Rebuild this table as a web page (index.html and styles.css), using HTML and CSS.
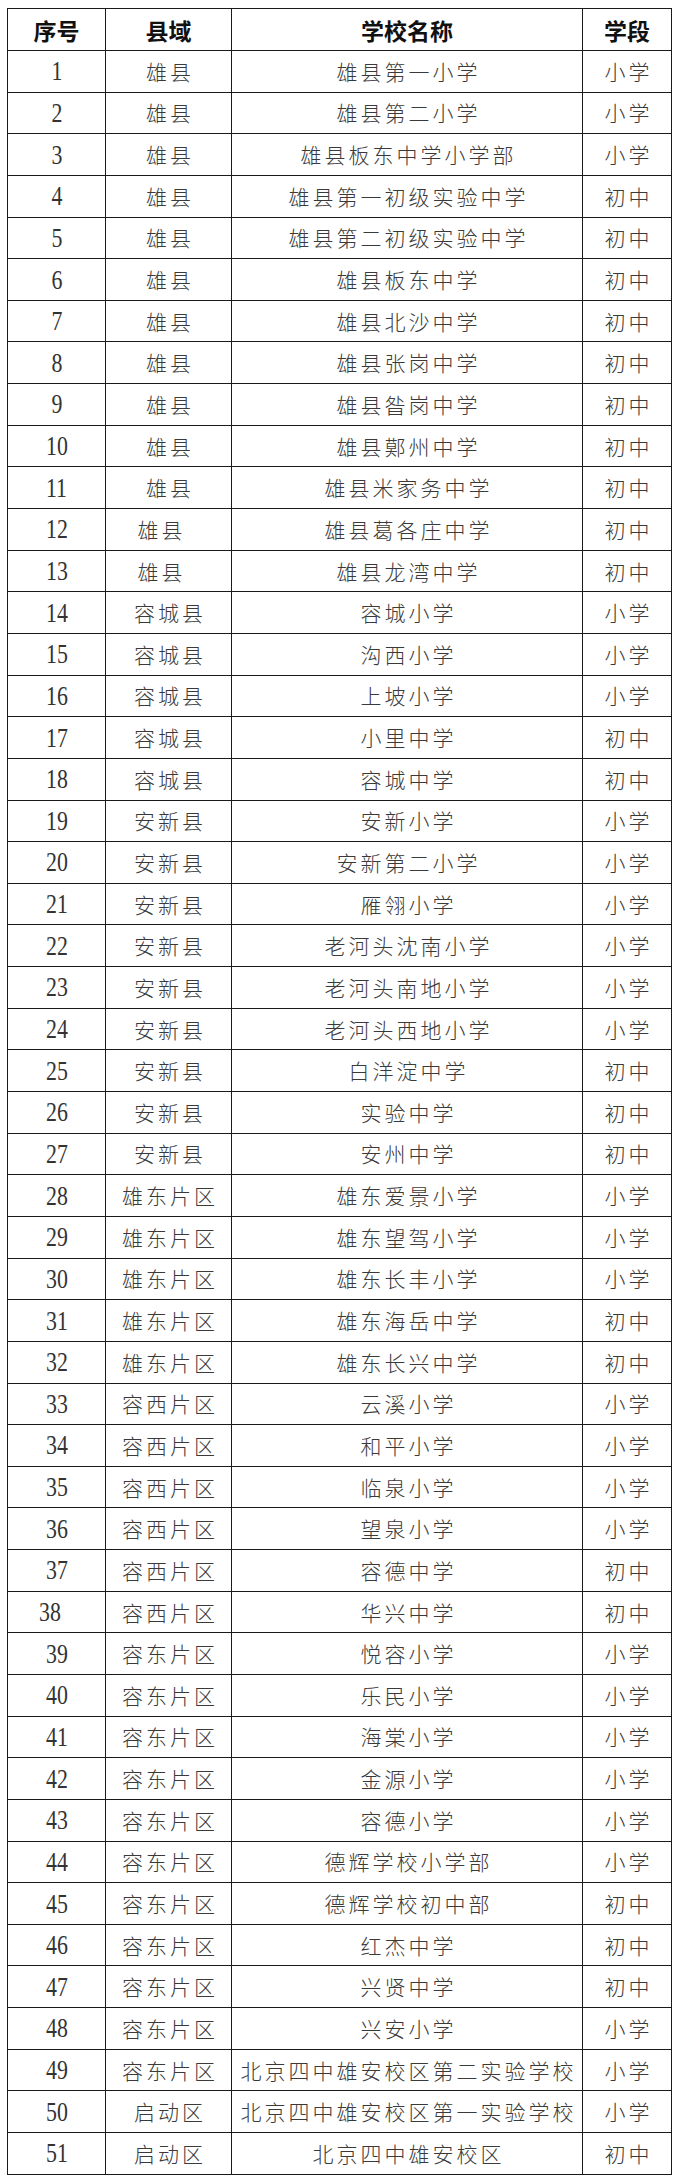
FILE: index.html
```html
<!DOCTYPE html>
<html lang="zh-CN">
<head>
<meta charset="utf-8">
<title>学校名单</title>
<link rel="stylesheet" href="styles.css">
</head>
<body>
<table class="list">
  <colgroup>
    <col class="c-no"><col class="c-area"><col class="c-name"><col class="c-level">
  </colgroup>
  <thead>
    <tr><th>序号</th><th>县域</th><th>学校名称</th><th>学段</th></tr>
  </thead>
  <tbody>
    <tr><td class="num"><span>1</span></td><td>雄县</td><td>雄县第一小学</td><td>小学</td></tr>
    <tr><td class="num"><span>2</span></td><td>雄县</td><td>雄县第二小学</td><td>小学</td></tr>
    <tr><td class="num"><span>3</span></td><td>雄县</td><td>雄县板东中学小学部</td><td>小学</td></tr>
    <tr><td class="num"><span>4</span></td><td>雄县</td><td>雄县第一初级实验中学</td><td>初中</td></tr>
    <tr><td class="num"><span>5</span></td><td>雄县</td><td>雄县第二初级实验中学</td><td>初中</td></tr>
    <tr><td class="num"><span>6</span></td><td>雄县</td><td>雄县板东中学</td><td>初中</td></tr>
    <tr><td class="num"><span>7</span></td><td>雄县</td><td>雄县北沙中学</td><td>初中</td></tr>
    <tr><td class="num"><span>8</span></td><td>雄县</td><td>雄县张岗中学</td><td>初中</td></tr>
    <tr><td class="num"><span>9</span></td><td>雄县</td><td>雄县昝岗中学</td><td>初中</td></tr>
    <tr><td class="num"><span>10</span></td><td>雄县</td><td>雄县鄚州中学</td><td>初中</td></tr>
    <tr><td class="num"><span>11</span></td><td>雄县</td><td>雄县米家务中学</td><td>初中</td></tr>
    <tr><td class="num"><span>12</span></td><td class="off">雄县</td><td>雄县葛各庄中学</td><td>初中</td></tr>
    <tr><td class="num"><span>13</span></td><td class="off">雄县</td><td>雄县龙湾中学</td><td>初中</td></tr>
    <tr><td class="num"><span>14</span></td><td>容城县</td><td>容城小学</td><td>小学</td></tr>
    <tr><td class="num"><span>15</span></td><td>容城县</td><td>沟西小学</td><td>小学</td></tr>
    <tr><td class="num"><span>16</span></td><td>容城县</td><td>上坡小学</td><td>小学</td></tr>
    <tr><td class="num"><span>17</span></td><td>容城县</td><td>小里中学</td><td>初中</td></tr>
    <tr><td class="num"><span>18</span></td><td>容城县</td><td>容城中学</td><td>初中</td></tr>
    <tr><td class="num"><span>19</span></td><td>安新县</td><td>安新小学</td><td>小学</td></tr>
    <tr><td class="num"><span>20</span></td><td>安新县</td><td>安新第二小学</td><td>小学</td></tr>
    <tr><td class="num"><span>21</span></td><td>安新县</td><td>雁翎小学</td><td>小学</td></tr>
    <tr><td class="num"><span>22</span></td><td>安新县</td><td>老河头沈南小学</td><td>小学</td></tr>
    <tr><td class="num"><span>23</span></td><td>安新县</td><td>老河头南地小学</td><td>小学</td></tr>
    <tr><td class="num"><span>24</span></td><td>安新县</td><td>老河头西地小学</td><td>小学</td></tr>
    <tr><td class="num"><span>25</span></td><td>安新县</td><td>白洋淀中学</td><td>初中</td></tr>
    <tr><td class="num"><span>26</span></td><td>安新县</td><td>实验中学</td><td>初中</td></tr>
    <tr><td class="num"><span>27</span></td><td>安新县</td><td>安州中学</td><td>初中</td></tr>
    <tr><td class="num"><span>28</span></td><td>雄东片区</td><td>雄东爱景小学</td><td>小学</td></tr>
    <tr><td class="num"><span>29</span></td><td>雄东片区</td><td>雄东望驾小学</td><td>小学</td></tr>
    <tr><td class="num"><span>30</span></td><td>雄东片区</td><td>雄东长丰小学</td><td>小学</td></tr>
    <tr><td class="num"><span>31</span></td><td>雄东片区</td><td>雄东海岳中学</td><td>初中</td></tr>
    <tr><td class="num"><span>32</span></td><td>雄东片区</td><td>雄东长兴中学</td><td>初中</td></tr>
    <tr><td class="num"><span>33</span></td><td>容西片区</td><td>云溪小学</td><td>小学</td></tr>
    <tr><td class="num"><span>34</span></td><td>容西片区</td><td>和平小学</td><td>小学</td></tr>
    <tr><td class="num"><span>35</span></td><td>容西片区</td><td>临泉小学</td><td>小学</td></tr>
    <tr><td class="num"><span>36</span></td><td>容西片区</td><td>望泉小学</td><td>小学</td></tr>
    <tr><td class="num"><span>37</span></td><td>容西片区</td><td>容德中学</td><td>初中</td></tr>
    <tr><td class="num off"><span>38</span></td><td>容西片区</td><td>华兴中学</td><td>初中</td></tr>
    <tr><td class="num"><span>39</span></td><td>容东片区</td><td>悦容小学</td><td>小学</td></tr>
    <tr><td class="num"><span>40</span></td><td>容东片区</td><td>乐民小学</td><td>小学</td></tr>
    <tr><td class="num"><span>41</span></td><td>容东片区</td><td>海棠小学</td><td>小学</td></tr>
    <tr><td class="num"><span>42</span></td><td>容东片区</td><td>金源小学</td><td>小学</td></tr>
    <tr><td class="num"><span>43</span></td><td>容东片区</td><td>容德小学</td><td>小学</td></tr>
    <tr><td class="num"><span>44</span></td><td>容东片区</td><td>德辉学校小学部</td><td>小学</td></tr>
    <tr><td class="num"><span>45</span></td><td>容东片区</td><td>德辉学校初中部</td><td>初中</td></tr>
    <tr><td class="num"><span>46</span></td><td>容东片区</td><td>红杰中学</td><td>初中</td></tr>
    <tr><td class="num"><span>47</span></td><td>容东片区</td><td>兴贤中学</td><td>初中</td></tr>
    <tr><td class="num"><span>48</span></td><td>容东片区</td><td>兴安小学</td><td>小学</td></tr>
    <tr><td class="num"><span>49</span></td><td>容东片区</td><td>北京四中雄安校区第二实验学校</td><td>小学</td></tr>
    <tr><td class="num"><span>50</span></td><td>启动区</td><td>北京四中雄安校区第一实验学校</td><td>小学</td></tr>
    <tr><td class="num"><span>51</span></td><td>启动区</td><td>北京四中雄安校区</td><td>初中</td></tr>
  </tbody>
</table>
</body>
</html>
```
FILE: styles.css
```css
html, body {
  margin: 0;
  padding: 0;
  background: #ffffff;
}
body {
  padding: 8px 0 0 7px;
}
.list {
  border-collapse: collapse;
  table-layout: fixed;
  width: 665px;
  font-family: "Noto Sans CJK SC", "Liberation Serif", serif;
  color: #3a3a3a;
}
.c-no { width: 98px; }
.c-area { width: 126px; }
.c-name { width: 351px; }
.c-level { width: 89px; }

.list th,
.list td {
  border: 1.5px solid #1a1a1a;
  padding: 0;
  text-align: center;
  vertical-align: middle;
  white-space: nowrap;
  overflow: hidden;
}
.list thead tr { height: 42px; }
.list tbody tr { height: 41.65px; }

.list th {
  font-size: 23px;
  font-weight: 700;
  color: #111;
  letter-spacing: 0;
}
.list td {
  font-size: 21px;
  font-weight: 300;
  letter-spacing: 3px;
  padding-left: 3px;
  line-height: 1;
}
.list td.num {
  font-family: "Liberation Serif", serif;
  font-weight: 400;
  letter-spacing: 0;
  padding-left: 0;
  color: #333;
}
.list td.num span {
  display: inline-block;
  font-size: 28px;
  transform: scaleX(0.78);
}
.list td.off {
  padding-left: 0;
  padding-right: 14px;
}
```
